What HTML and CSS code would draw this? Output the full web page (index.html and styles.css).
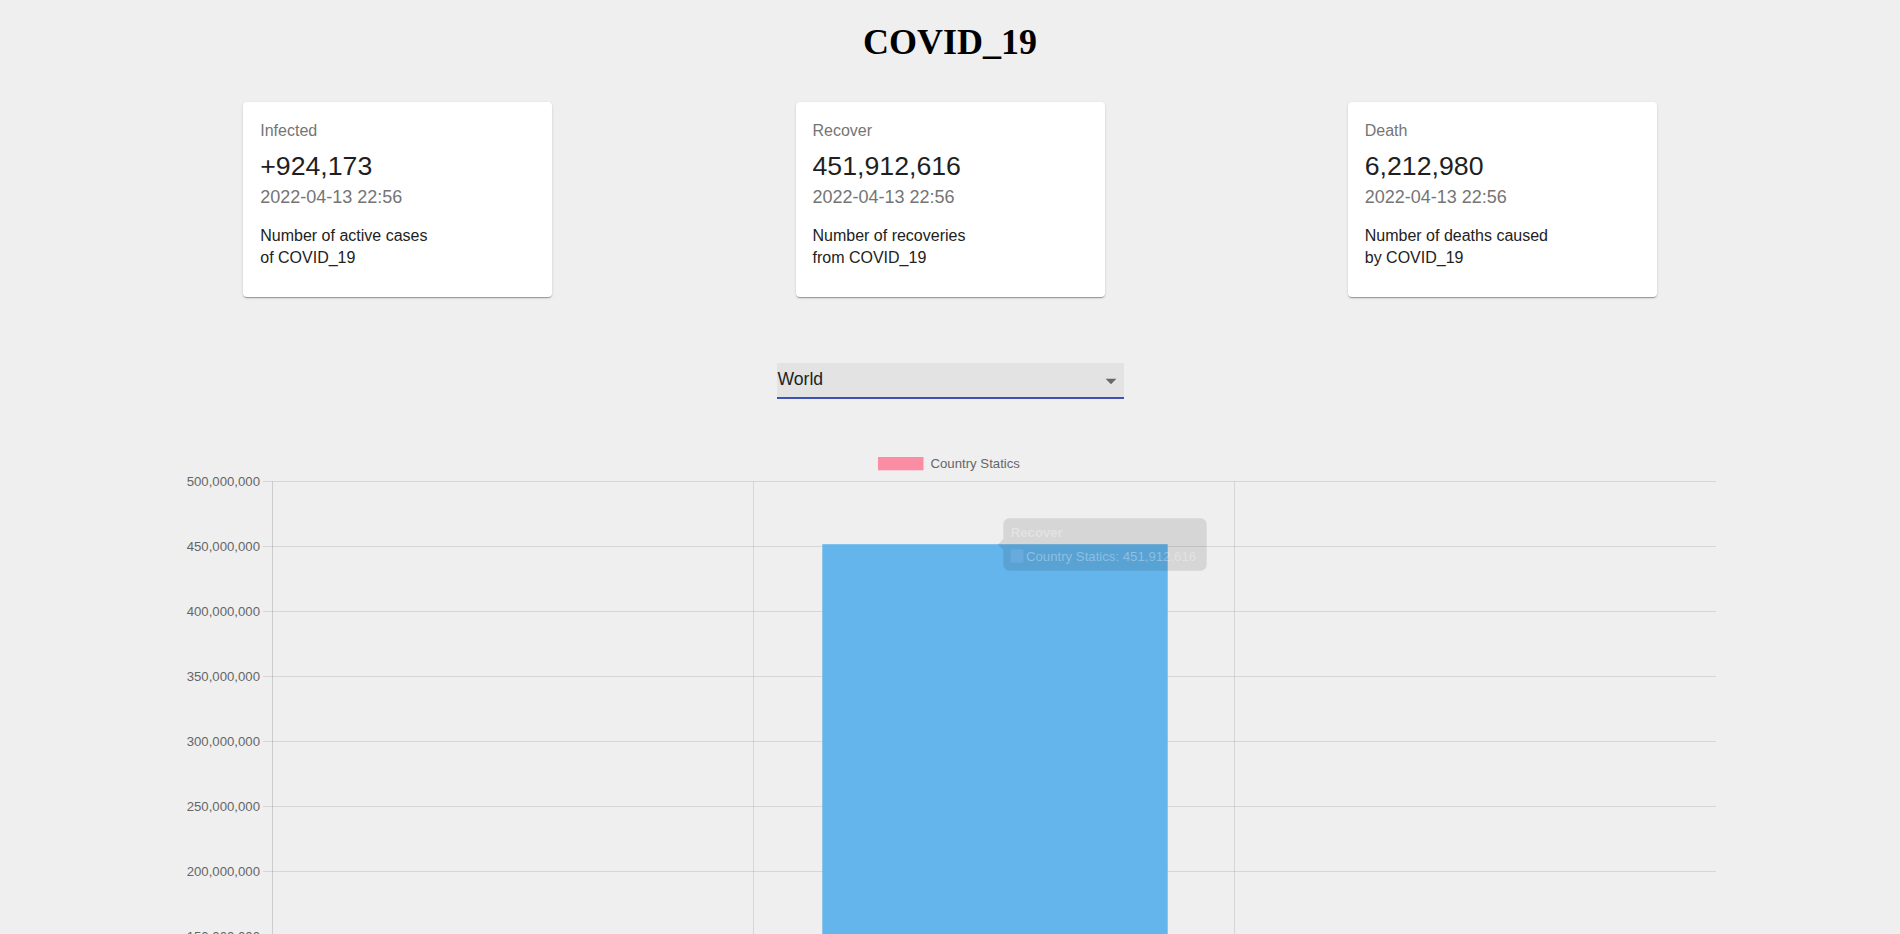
FILE: index.html
```html
<!DOCTYPE html>
<html lang="en">
<head>
<meta charset="utf-8">
<title>COVID_19</title>
<link rel="stylesheet" href="styles.css">
</head>
<body>
<h1 class="title">COVID_19</h1>

<div class="cards">
  <div class="card">
    <div class="card-label">Infected</div>
    <div class="card-value">+924,173</div>
    <div class="card-date">2022-04-13 22:56</div>
    <div class="card-desc">Number of active cases<br>of COVID_19</div>
  </div>
  <div class="card">
    <div class="card-label">Recover</div>
    <div class="card-value">451,912,616</div>
    <div class="card-date">2022-04-13 22:56</div>
    <div class="card-desc">Number of recoveries<br>from COVID_19</div>
  </div>
  <div class="card">
    <div class="card-label">Death</div>
    <div class="card-value">6,212,980</div>
    <div class="card-date">2022-04-13 22:56</div>
    <div class="card-desc">Number of deaths caused<br>by COVID_19</div>
  </div>
</div>

<div class="picker-row">
  <div class="picker">
    <span class="picker-text">World</span>
    <svg class="picker-icon" viewBox="0 0 24 24" width="26" height="26"><path d="M7 10l5 5 5-5z"/></svg>
  </div>
</div>

<div class="chart">
  <svg class="chart-svg" width="1900" height="494" viewBox="0 0 1900 494">
    <g class="legend">
      <rect x="878" y="17" width="45.5" height="13.3" fill="rgb(250,141,164)"/>
      <text x="930.5" y="28.3" class="tick">Country Statics</text>
    </g>
    <g class="grid" stroke="rgba(0,0,0,0.1)" stroke-width="1">
      <line x1="263" y1="41.5" x2="1716" y2="41.5"/>
      <line x1="263" y1="106.5" x2="1716" y2="106.5"/>
      <line x1="263" y1="171.5" x2="1716" y2="171.5"/>
      <line x1="263" y1="236.5" x2="1716" y2="236.5"/>
      <line x1="263" y1="301.5" x2="1716" y2="301.5"/>
      <line x1="263" y1="366.5" x2="1716" y2="366.5"/>
      <line x1="263" y1="431.5" x2="1716" y2="431.5"/>
      <line x1="753.5" y1="41.5" x2="753.5" y2="494"/>
      <line x1="1234.5" y1="41.5" x2="1234.5" y2="494"/>
    </g>
    <line x1="272.5" y1="41.5" x2="272.5" y2="494" stroke="rgba(0,0,0,0.14)" stroke-width="1"/>
    <g class="bars">
      <rect x="822.3" y="104.2" width="345.4" height="390" fill="rgb(100,181,236)"/>
    </g>
    <g class="ylabels" text-anchor="end">
      <text x="260" y="46" class="tick">500,000,000</text>
      <text x="260" y="111" class="tick">450,000,000</text>
      <text x="260" y="176" class="tick">400,000,000</text>
      <text x="260" y="241" class="tick">350,000,000</text>
      <text x="260" y="306" class="tick">300,000,000</text>
      <text x="260" y="371" class="tick">250,000,000</text>
      <text x="260" y="436" class="tick">200,000,000</text>
      <text x="260" y="501" class="tick">150,000,000</text>
    </g>
    <g class="tooltip">
      <path d="M1003.3 84.3 a6 6 0 0 1 6 -6 h191.4 a6 6 0 0 1 6 6 v40.4 a6 6 0 0 1 -6 6 h-191.4 a6 6 0 0 1 -6 -6 v-14.7 l-5.5 -5.5 l5.5 -5.5 z" fill="rgba(0,0,0,0.1)"/>
      <text x="1010.7" y="97.3" class="tip-title">Recover</text>
      <rect x="1010.7" y="109.3" width="12.8" height="13.2" fill="rgb(104,170,220)"/>
      <text x="1026" y="121" class="tip-body">Country Statics: 451,912,616</text>
    </g>
  </svg>
</div>
</body>
</html>
```

FILE: styles.css
```css
html, body {
  margin: 0;
  padding: 0;
  overflow: hidden;
}

body {
  background: #efefef;
  font-family: "Liberation Sans", Arial, Helvetica, sans-serif;
  width: 1900px;
  height: 934px;
}

.title {
  margin: 0;
  padding-top: 22px;
  font-family: "Liberation Serif", "Times New Roman", serif;
  font-weight: bold;
  font-size: 36px;
  line-height: 40px;
  text-align: center;
  color: #000;
}

.cards {
  margin-top: 40px;
  display: flex;
  justify-content: space-evenly;
}

.card {
  width: 309px;
  height: 195px;
  box-sizing: border-box;
  padding: 17px 17px 0;
  background: #fff;
  border-radius: 4px;
  box-shadow: 0 2px 1px -1px rgba(0,0,0,0.2), 0 1px 1px 0 rgba(0,0,0,0.14), 0 1px 3px 0 rgba(0,0,0,0.12);
}

.card-label {
  font-size: 16px;
  line-height: 24px;
  color: #757575;
  margin-bottom: 5.6px;
}

.card-value {
  font-size: 26.7px;
  line-height: 35.6px;
  color: #1f1f1f;
}

.card-date {
  font-size: 18px;
  line-height: 27px;
  color: #757575;
  margin-bottom: 13.9px;
}

.card-desc {
  font-size: 16px;
  line-height: 22px;
  color: #222;
}

.picker-row {
  margin-top: 66px;
  display: flex;
  justify-content: center;
}

.picker {
  width: 347px;
  height: 36px;
  box-sizing: border-box;
  display: flex;
  align-items: center;
  justify-content: space-between;
  background: #e3e3e3;
  border-bottom: 2px solid #3f51b5;
}

.picker-text {
  font-size: 17.6px;
  line-height: 21px;
  color: #222;
  padding-left: 1px;
  align-self: flex-start;
  padding-top: 6px;
}

.picker-icon {
  fill: rgba(0,0,0,0.54);
  margin-top: 2px;
  flex: none;
}

.chart {
  margin-top: 41px;
}

.chart-svg {
  display: block;
}

.tick {
  font-family: "Liberation Sans", Arial, Helvetica, sans-serif;
  font-size: 13.2px;
  fill: #666;
}

.tip-title {
  font-family: "Liberation Sans", Arial, Helvetica, sans-serif;
  font-size: 13.2px;
  font-weight: bold;
  fill: rgba(255,255,255,0.32);
}

.tip-body {
  font-family: "Liberation Sans", Arial, Helvetica, sans-serif;
  font-size: 13.2px;
  fill: rgba(255,255,255,0.32);
}
```
